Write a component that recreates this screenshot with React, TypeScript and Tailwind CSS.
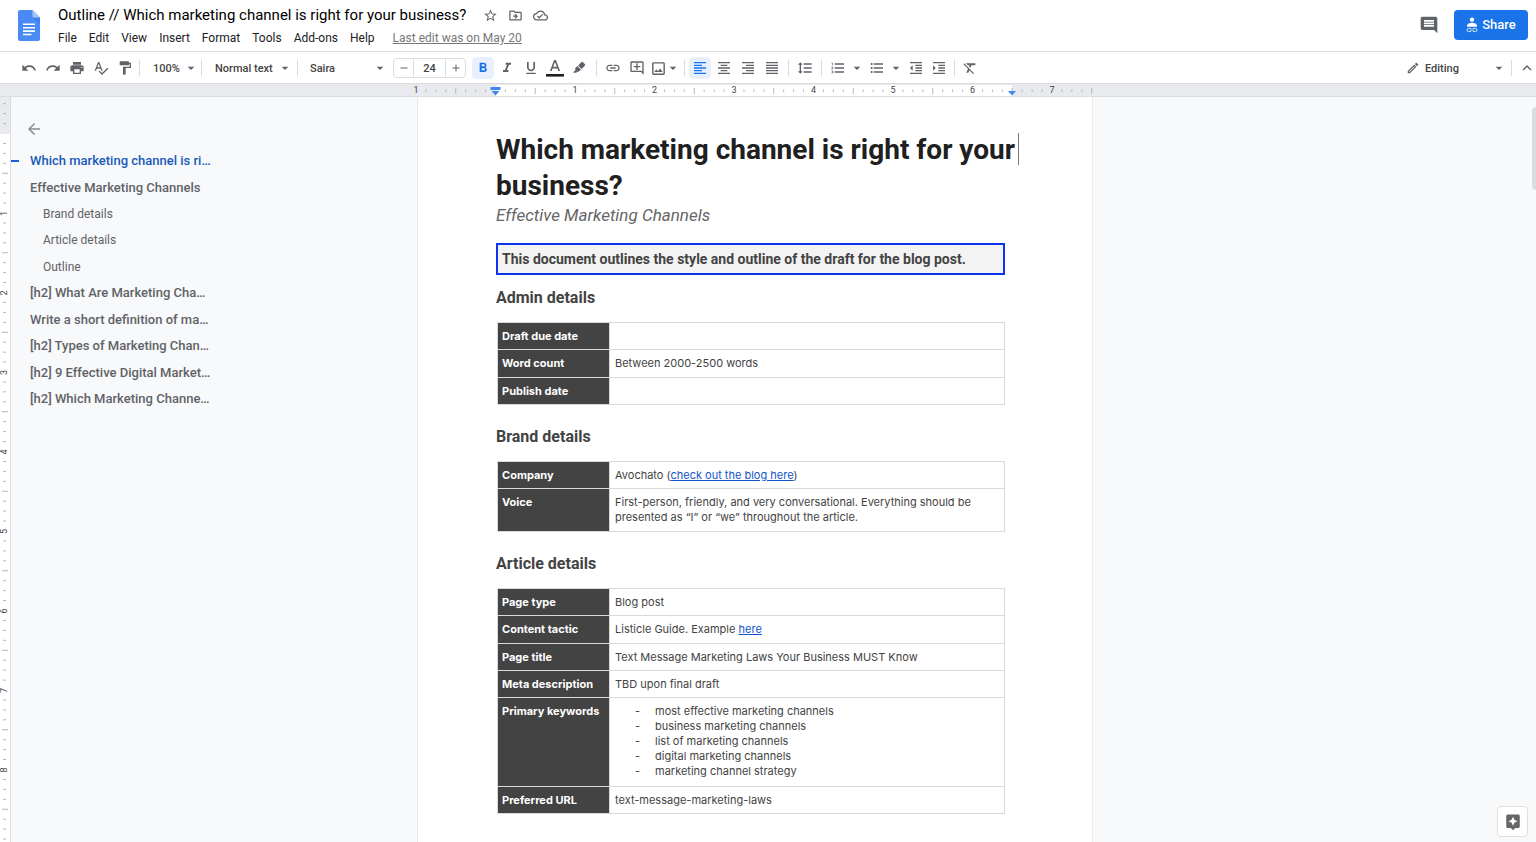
import type { ReactNode } from "react";
import type { IconType } from "react-icons";
import {
  MdAdd,
  MdArrowBack,
  MdArrowDropDown,
  MdAssistant,
  MdComment,
  MdFormatAlignCenter,
  MdFormatAlignJustify,
  MdFormatAlignLeft,
  MdFormatAlignRight,
  MdFormatBold,
  MdFormatClear,
  MdFormatIndentDecrease,
  MdFormatIndentIncrease,
  MdFormatItalic,
  MdFormatLineSpacing,
  MdFormatListBulleted,
  MdFormatListNumbered,
  MdFormatPaint,
  MdFormatUnderlined,
  MdKeyboardArrowUp,
  MdLink,
  MdOutlineAddComment,
  MdOutlineCloudDone,
  MdOutlineDriveFileMove,
  MdOutlineEdit,
  MdOutlineImage,
  MdPrint,
  MdRedo,
  MdRemove,
  MdSpellcheck,
  MdStarBorder,
  MdUndo,
} from "react-icons/md";

const MENUS = ["File", "Edit", "View", "Insert", "Format", "Tools", "Add-ons", "Help"];

const OUTLINE = [
  { text: "Which marketing channel is ri…", level: 1, active: true },
  { text: "Effective Marketing Channels", level: 1 },
  { text: "Brand details", level: 2 },
  { text: "Article details", level: 2 },
  { text: "Outline", level: 2 },
  { text: "[h2] What Are Marketing Cha…", level: 1 },
  { text: "Write a short definition of ma…", level: 1 },
  { text: "[h2] Types of Marketing Chan…", level: 1 },
  { text: "[h2] 9 Effective Digital Market…", level: 1 },
  { text: "[h2] Which Marketing Channe…", level: 1 },
];

const KEYWORDS = [
  "most effective marketing channels",
  "business marketing channels",
  "list of marketing channels",
  "digital marketing channels",
  "marketing channel strategy",
];

const INCH = 79.5;

function DocsLogo() {
  return (
    <svg viewBox="0 0 22 31" className="h-[31px] w-[22px]" aria-hidden="true">
      <path d="M2 0h12.5L22 7.5V29a2 2 0 0 1-2 2H2a2 2 0 0 1-2-2V2a2 2 0 0 1 2-2z" fill="#4a8af4" />
      <path d="M14.5 7.5 22 14V7.5z" fill="#3b78e0" opacity=".5" />
      <path d="M14.5 0 22 7.5h-6a1.5 1.5 0 0 1-1.5-1.5z" fill="#a6c5fa" />
      <path d="M5 13.5h12v1.6H5zM5 16.9h12v1.6H5zM5 20.3h12v1.6H5zM5 23.7h8.5v1.6H5z" fill="#fff" />
    </svg>
  );
}

function ShareIcon() {
  return (
    <svg viewBox="0 0 12 16" className="h-4 w-3" fill="none" aria-hidden="true">
      <circle cx="6" cy="2.600" r="2.2" fill="#fff" />
      <path d="M1 9.800V9c0-2.200 2.600-3.200 5-3.200s5 1 5 3.200v.8z" fill="#fff" />
      <path
        d="M5.200 11.400H2.600a1.600 1.600 0 0 0 0 3.200h2.600M6.800 11.400h2.600a1.600 1.600 0 0 1 0 3.200H6.800M4 13h4"
        stroke="#fff"
        strokeWidth=".8"
      />
    </svg>
  );
}

function TextColorIcon() {
  return (
    <svg viewBox="0 0 18 18" className="h-[18px] w-[18px] shrink-0" aria-hidden="true">
      <path d="M8.1 1 3.9 12h1.8l.9-2.6h4.8l.9 2.6h1.8L9.9 1zm-.9 6.8L9 2.9l1.8 4.9z" fill="#5f6368" />
      <path d="M0 15h18v2.6H0z" fill="#202124" />
    </svg>
  );
}

function HighlightIcon() {
  return (
    <svg viewBox="0 0 14 14" className="h-[14px] w-[14px]" fill="#5f6368" aria-hidden="true">
      <path d="M9.3 1.2a1.2 1.2 0 0 1 1.700 0l1.800 1.800a1.2 1.2 0 0 1 0 1.700L9.600 7.900 6.100 4.400z" />
      <path d="M5.400 5.100 8.900 8.600 7.200 10.300a1.2 1.2 0 0 1-1.600.1L4.200 11.800H1l2.600-3a1.2 1.2 0 0 1 .1-2z" />
    </svg>
  );
}

function HorizontalRuler() {
  const ticks = Array.from({ length: 69 }, (_, i) => i - 8).filter((i) => i % 8 !== 0);
  return (
    <svg className="block h-[13px] w-[676px] overflow-visible" aria-hidden="true">
      <rect x="79" y="1" width="516" height="11" fill="#fff" />
      {ticks.map((i) => {
        const half = i % 4 === 0;
        return (
          <rect
            key={i}
            x={78 + (i * INCH) / 8}
            y={half ? 4 : 5.5}
            width="1"
            height={half ? 6 : 2.5}
            fill="#b4b7bb"
          />
        );
      })}
      {[1, null, 1, 2, 3, 4, 5, 6, 7].map((n, i) =>
        n === null ? null : (
          <text key={i} x={-1 + i * INCH} y="9" fontSize="9" textAnchor="middle" fill="#444">
            {n}
          </text>
        )
      )}
      <path d="M73.500 3h10v3h-10zM74.500 7h8l-4 4.500z" fill="#4285f4" />
      <path d="M591 7h8l-4 4.500z" fill="#4285f4" />
    </svg>
  );
}

function VerticalRuler() {
  const ticks = Array.from({ length: 76 }, (_, i) => i - 3).filter((i) => i % 8 !== 0);
  return (
    <div className="w-[11px] shrink-0 overflow-hidden border-r border-[#dadce0] bg-white">
      <svg className="block h-[745px] w-[10px]" aria-hidden="true">
        <rect width="10" height="37" fill="#e8eaed" />
        {ticks.map((i) => {
          const half = i % 4 === 0;
          return (
            <rect
              key={i}
              x={half ? 2 : 3}
              y={36 + (i * INCH) / 8}
              width={half ? 6 : 3}
              height="1"
              fill="#b4b7bb"
            />
          );
        })}
        {[1, 2, 3, 4, 5, 6, 7, 8].map((n) => (
          <text
            key={n}
            transform={`translate(7 ${37 + n * INCH}) rotate(-90)`}
            fontSize="9"
            textAnchor="middle"
            fill="#444"
          >
            {n}
          </text>
        ))}
      </svg>
    </div>
  );
}

function Divider() {
  return <span className="h-4 w-px shrink-0 bg-[#dadce0]" />;
}

type ToolProps = { label: string; icon: IconType; active?: boolean };

function Tool({ label, icon: Icon, active }: ToolProps) {
  return (
    <button
      type="button"
      aria-label={label}
      className={`flex h-[22px] w-[22px] items-center justify-center rounded-sm ${
        active ? "bg-[#e8f0fe] text-[#1a73e8]" : ""
      }`}
    >
      <Icon className="h-4 w-4" />
    </button>
  );
}

function Picker({ label, value, className }: { label: string; value: string; className: string }) {
  return (
    <div className={`relative flex items-center ${className}`}>
      <select
        aria-label={label}
        defaultValue={value}
        className="w-full appearance-none bg-transparent pt-[2px] text-[11px] font-medium text-[#444]"
      >
        <option>{value}</option>
      </select>
      <MdArrowDropDown className="pointer-events-none absolute right-0 h-4 w-4" />
    </div>
  );
}

function Header() {
  return (
    <header className="flex h-[51px] shrink-0 items-center pr-2 pl-[18px]">
      <DocsLogo />
      <div className="ml-[18px] flex flex-col pb-[2px]">
        <div className="flex h-[27px] items-center gap-[10px] pt-[3px] text-[#5f6368]">
          <h1 className="mr-[7px] text-[15px] text-black">
            Outline // Which marketing channel is right for your business?
          </h1>
          <button type="button" aria-label="Star">
            <MdStarBorder className="h-[15px] w-[15px]" />
          </button>
          <button type="button" aria-label="Move">
            <MdOutlineDriveFileMove className="h-[15px] w-[15px]" />
          </button>
          <button type="button" aria-label="Document status">
            <MdOutlineCloudDone className="h-[15px] w-[15px]" />
          </button>
        </div>
        <nav className="flex h-[21px] items-center gap-3 text-xs text-[#202124]">
          {MENUS.map((menu) => (
            <button type="button" key={menu}>
              {menu}
            </button>
          ))}
          <a href="#history" className="ml-[6px] text-[#777] underline">
            Last edit was on May 20
          </a>
        </nav>
      </div>
      <div className="ml-auto flex items-center gap-[15px] pb-[2px]">
        <button type="button" aria-label="Comments" className="text-[#5f6368]">
          <MdComment className="h-5 w-5" />
        </button>
        <button
          type="button"
          className="flex h-[30px] w-[74px] items-center justify-center gap-1 rounded bg-[#1a73e8] text-[13px] font-medium text-white"
        >
          <ShareIcon />
          Share
        </button>
      </div>
    </header>
  );
}

function Toolbar() {
  return (
    <div className="flex h-[33px] shrink-0 items-center border-y border-[#dadce0] pt-px pl-[18px] text-[#5f6368]">
      <div className="flex gap-[2px]">
        <Tool label="Undo" icon={MdUndo} />
        <Tool label="Redo" icon={MdRedo} />
        <Tool label="Print" icon={MdPrint} />
        <Tool label="Spelling check" icon={MdSpellcheck} />
        <Tool label="Paint format" icon={MdFormatPaint} />
      </div>
      <div className="ml-[3px] flex items-center">
        <Divider />
        <Picker label="Zoom" value="100%" className="ml-[13px] w-[46px]" />
        <span className="w-[2px]" />
        <Divider />
        <Picker label="Styles" value="Normal text" className="ml-[13px] w-[78px]" />
        <span className="w-1" />
        <Divider />
        <Picker label="Font" value="Saira" className="ml-3 w-[78px]" />
      </div>
      <div className="ml-[5px] flex h-5 items-center rounded-sm border border-[#dadce0]">
        <button type="button" aria-label="Decrease font size" className="flex w-[19px] justify-center">
          <MdRemove className="h-3 w-3" />
        </button>
        <input
          aria-label="Font size"
          defaultValue="24"
          className="h-full w-[33px] border-x border-[#dadce0] text-center text-[11px] font-medium text-[#444]"
        />
        <button type="button" aria-label="Increase font size" className="flex w-[19px] justify-center">
          <MdAdd className="h-3 w-3" />
        </button>
      </div>
      <div className="ml-[6px] flex items-center gap-[2px]">
        <Tool label="Bold" icon={MdFormatBold} active />
        <Tool label="Italic" icon={MdFormatItalic} />
        <Tool label="Underline" icon={MdFormatUnderlined} />
        <button type="button" aria-label="Text color" className="flex w-[22px] justify-center">
          <TextColorIcon />
        </button>
        <button type="button" aria-label="Highlight color" className="flex w-[22px] justify-center">
          <HighlightIcon />
        </button>
      </div>
      <div className="ml-[6px] flex items-center gap-[2px]">
        <Divider />
        <span className="w-px" />
        <Tool label="Insert link" icon={MdLink} />
        <Tool label="Add comment" icon={MdOutlineAddComment} />
        <button type="button" aria-label="Insert image" className="flex w-[29px] items-center">
          <MdOutlineImage className="h-[17px] w-[17px] shrink-0" />
          <MdArrowDropDown className="-ml-[2px] h-4 w-4 shrink-0" />
        </button>
        <span className="w-px" />
        <Divider />
      </div>
      <div className="ml-1 flex items-center gap-[2px]">
        <Tool label="Left align" icon={MdFormatAlignLeft} active />
        <Tool label="Center align" icon={MdFormatAlignCenter} />
        <Tool label="Right align" icon={MdFormatAlignRight} />
        <Tool label="Justify" icon={MdFormatAlignJustify} />
        <span className="w-px" />
        <Divider />
        <span className="w-px" />
        <Tool label="Line spacing" icon={MdFormatLineSpacing} />
        <span className="w-px" />
        <Divider />
      </div>
      <div className="ml-2 flex items-center">
        <button type="button" aria-label="Numbered list" className="flex w-[39px] items-center gap-[3px]">
          <MdFormatListNumbered className="h-4 w-4" />
          <MdArrowDropDown className="h-4 w-4" />
        </button>
        <button type="button" aria-label="Bulleted list" className="flex w-9 items-center gap-[3px]">
          <MdFormatListBulleted className="h-4 w-4" />
          <MdArrowDropDown className="h-4 w-4" />
        </button>
        <Tool label="Decrease indent" icon={MdFormatIndentDecrease} />
        <span className="w-px" />
        <Tool label="Increase indent" icon={MdFormatIndentIncrease} />
        <span className="w-1" />
        <Divider />
        <span className="w-1" />
        <Tool label="Clear formatting" icon={MdFormatClear} />
      </div>
      <div className="ml-auto flex items-center">
        <MdOutlineEdit className="mr-[5px] h-[14px] w-[14px]" />
        <Picker label="Mode" value="Editing" className="w-[82px]" />
        <span className="w-1" />
        <Divider />
        <button type="button" aria-label="Hide the menus" className="ml-[6px]">
          <MdKeyboardArrowUp className="h-[18px] w-[18px]" />
        </button>
      </div>
    </div>
  );
}

function Outline() {
  return (
    <aside className="min-w-0 flex-1 pt-[23px]">
      <button type="button" aria-label="Close document outline" className="ml-[14px] block text-[#8a8d91]">
        <MdArrowBack className="h-[18px] w-[18px]" />
      </button>
      <ul className="mt-[10px] flex h-[264px] flex-col justify-between">
        {OUTLINE.map((item) => (
          <li key={item.text} className="flex h-[26px] items-center">
            <span className={`h-[2px] w-2 ${item.active ? "bg-[#1a5fd0]" : ""}`} />
            <a
              href="#heading"
              className={
                item.level === 2
                  ? "pl-6 text-xs text-[#5f6368]"
                  : item.active
                    ? "pl-[11px] text-[13px] font-medium text-[#185abc]"
                    : "pl-[11px] text-[13px] font-medium text-[#5f6368]"
              }
            >
              {item.text}
            </a>
          </li>
        ))}
      </ul>
    </aside>
  );
}

function Row({ label, children }: { label: string; children?: ReactNode }) {
  return (
    <tr>
      <th className="w-[112px] border border-[#d9d9d9] bg-[#434343] px-1 pt-[6px] pb-[5px] text-left align-top font-bold text-white">
        {label}
      </th>
      <td className="border border-[#d9d9d9] px-[5px] pt-[6px] pb-[5px] align-top">{children}</td>
    </tr>
  );
}

function Section({ title, height, children }: { title: string; height: string; children: ReactNode }) {
  return (
    <section>
      <h3 className="text-base leading-6 font-bold text-[#434343]">{title}</h3>
      <table
        className={`mt-3 mb-5 ml-px w-[508px] table-fixed border-collapse font-[Inter,sans-serif] text-[11px] leading-[15px] text-[#434343] ${height}`}
      >
        <tbody>{children}</tbody>
      </table>
    </section>
  );
}

function Document() {
  return (
    <main className="w-[676px] shrink-0 border-x border-[#e8eaed] bg-white px-[78px] pt-[35px]">
      <h1 className="relative text-[28px] leading-9 font-bold whitespace-nowrap text-[#202020]">
        Which marketing channel is right for your
        <br />
        business?
        {/* text caret */}
        <span className="absolute top-px -right-[5px] h-8 w-px bg-[#777]" />
      </h1>
      <h2 className="text-[17px] leading-[22px] text-[#666] italic">Effective Marketing Channels</h2>
      <p className="mt-[17px] mb-[11px] h-8 w-[509px] border-2 border-[#0b35f1] bg-[#f3f3f3] pl-1 text-sm leading-7 font-bold text-[#434343]">
        This document outlines the style and outline of the draft for the blog post.
      </p>
      <Section title="Admin details" height="h-[83px]">
        <Row label="Draft due date" />
        <Row label="Word count">Between 2000-2500 words</Row>
        <Row label="Publish date" />
      </Section>
      <Section title="Brand details" height="h-[71px]">
        <Row label="Company">
          Avochato (
          <a href="#blog" className="text-[#1155cc] underline">
            check out the blog here
          </a>
          )
        </Row>
        <Row label="Voice">
          First-person, friendly, and very conversational. Everything should be
          <br />
          presented as “I” or “we” throughout the article.
        </Row>
      </Section>
      <Section title="Article details" height="h-[226px]">
        <Row label="Page type">Blog post</Row>
        <Row label="Content tactic">
          Listicle Guide. Example{" "}
          <a href="#example" className="text-[#1155cc] underline">
            here
          </a>
        </Row>
        <Row label="Page title">Text Message Marketing Laws Your Business MUST Know</Row>
        <Row label="Meta description">TBD upon final draft</Row>
        <Row label="Primary keywords">
          <ul className="pl-5">
            {KEYWORDS.map((keyword) => (
              <li key={keyword} className="flex">
                <span className="w-5">-</span>
                {keyword}
              </li>
            ))}
          </ul>
        </Row>
        <Row label="Preferred URL">text-message-marketing-laws</Row>
      </Section>
    </main>
  );
}

export default function App() {
  return (
    <div className="flex h-screen flex-col overflow-hidden bg-white font-['Roboto',sans-serif]">
      <Header />
      <Toolbar />
      <div className="flex h-[13px] shrink-0 justify-center border-b border-[#dadce0] bg-[#e8eaed] pr-[26px]">
        <HorizontalRuler />
      </div>
      <div className="relative flex min-h-0 flex-1 overflow-hidden bg-[#f8f9fa]">
        <VerticalRuler />
        <div className="flex flex-1 pr-[37px]">
          <Outline />
          <Document />
          <div className="flex-1" />
        </div>
        {/* scrollbar thumb */}
        <span className="absolute top-[10px] right-0 h-[83px] w-1 rounded-l bg-[#dadce0]" />
        <button
          type="button"
          aria-label="Explore"
          className="absolute right-2 bottom-[5px] flex h-[31px] w-[31px] items-center justify-center rounded-sm border border-[#e0e0e0] bg-white text-[#666]"
        >
          <MdAssistant className="h-[18px] w-[18px]" />
        </button>
      </div>
    </div>
  );
}
